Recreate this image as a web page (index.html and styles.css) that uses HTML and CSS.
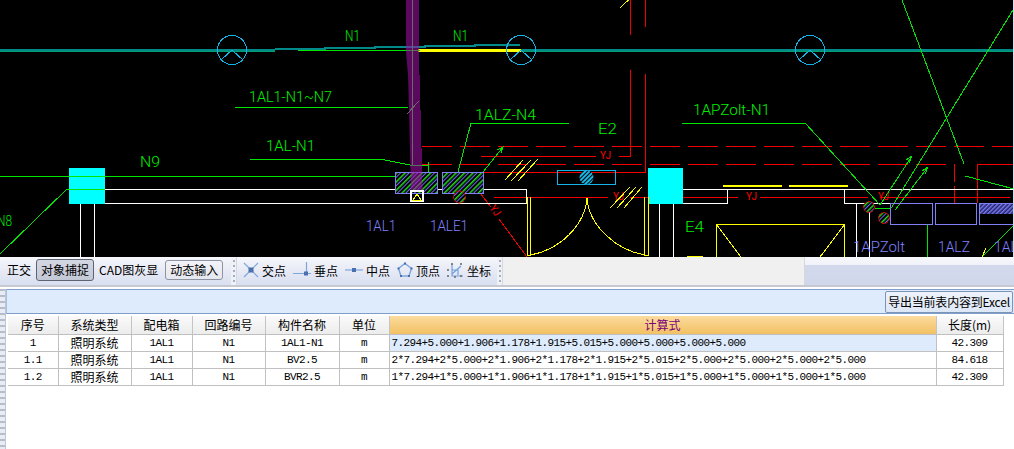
FILE: index.html
```html
<!DOCTYPE html>
<html lang="zh-CN">
<head>
<meta charset="utf-8">
<title>CAD</title>
<link rel="stylesheet" href="styles.css">
</head>
<body>
<div class="app">
  <svg class="canvas" width="1014" height="257" viewBox="0 0 1014 257">
    <defs>
      <pattern id="hatchG" width="6" height="6" patternUnits="userSpaceOnUse" patternTransform="rotate(45)">
        <rect width="6" height="6" fill="#000"/>
        <rect x="0" width="1.500" height="6" fill="#22dd22"/>
        <rect x="3" width="1" height="6" fill="#6a6af0"/>
      </pattern>
      <pattern id="hatchB" width="3" height="3" patternUnits="userSpaceOnUse" patternTransform="rotate(45)">
        <rect width="3" height="3" fill="#000"/>
        <rect x="0" width="2" height="3" fill="#1ab8e8"/>
      </pattern>
      <pattern id="hatchV" width="3" height="3" patternUnits="userSpaceOnUse" patternTransform="rotate(45)">
        <rect width="3" height="3" fill="#222266"/>
        <rect x="0" width="1.500" height="3" fill="#7a7af0"/>
      </pattern>
    </defs>

    <!-- long axis -->
    <path class="ln yellow w3" d="M418 50.500H521"/>
    <path class="ln green" d="M298 50.500H420"/>
    <path class="ln teal w3" d="M0 50H275M521 50H1014"/>
    <path class="ln teal w2" d="M275 49H325V48H375V47H425V46H475V45H520"/>
    <path class="ln axisg" d="M0 51H275M521 51H1014"/>

    <g class="cyanline">
      <circle cx="232" cy="50" r="14.500"/><path d="M232 50L221 60M232 50L243 60"/>
      <circle cx="521" cy="50" r="14.500"/><path d="M521 50L510 60M521 50L532 60"/>
      <circle cx="810" cy="50" r="14.500"/><path d="M810 50L799 60M810 50L821 60"/>
    </g>

    <!-- red structure -->
    <path class="ln red" d="M630 0V35M630 70V156H619M596 156H481M645 0V27M645 74V172H483"/>
    <path class="ln red dash" d="M422 146H1014M422 164H955"/>
    <path class="ln red" d="M977 203V164H1014M954 164V182M954 186V203"/>
    <path class="ln red" d="M494 197.500H608M630 197.500H738M760 197.500H868M880 197.500H1010"/>
    <path class="ln red" d="M480 193L491 207M499 219L527 257"/>
    <text class="cad redtx" x="600" y="159" textLength="11" lengthAdjust="spacingAndGlyphs">YJ</text>
    <text class="cad redtx" x="613" y="200" textLength="11" lengthAdjust="spacingAndGlyphs">YJ</text>
    <text class="cad redtx" x="746" y="200" textLength="11" lengthAdjust="spacingAndGlyphs">YJ</text>
    <text class="cad redtx" x="878" y="200" textLength="11" lengthAdjust="spacingAndGlyphs">YJ</text>
    <text class="cad redtx" transform="translate(489 208) rotate(55)" textLength="11" lengthAdjust="spacingAndGlyphs">YJ</text>

    <!-- walls -->
    <path class="ln white" d="M105 189H526V203H105M80.500 203V257M94.500 203V257"/>
    <path class="ln white" d="M683 189H727V203H683M727 189H1014M844 189V203H890M659.500 204V257M673.500 204V257M856 203V257M869 203V257"/>
    <rect class="cyanfill" x="69" y="168" width="36" height="36"/>
    <rect class="cyanfill" x="648" y="168" width="35" height="36"/>

    <!-- green leaders -->
    <path class="ln green" d="M0 176H395M67 189H105"/>
    <path class="ln green" d="M0 254L67 189"/>
    <path class="ln green" d="M235 107.500H408"/>
    <path class="ln green" d="M250 159H380L410 165H428M428 162V172"/>
    <path class="ln green" d="M471 123H569M458 172L471 123"/>
    <path class="ln green" d="M483 172L503 147M497 150L503 147 501 153"/>
    <path class="ln green" d="M682 123H805"/>
    <path class="ln green" d="M805 123L880 205M902 0L964 164M1013 10L890 210M965 176L1014 189M1014 225L982 257M880 205L912 156 906 160M912 156L909 163M895 210L928 167 922 171M928 167L925 174"/>
    <path class="ln green" d="M875 208H890M927 224V257"/>

    <!-- boxes -->
    <rect class="box hatched" x="395.500" y="172.500" width="42" height="21"/>
    <rect class="box hatched" x="442.500" y="172.500" width="41" height="21"/>
    <rect class="box" x="890.500" y="203.500" width="42" height="21"/>
    <rect class="box" x="935.500" y="203.500" width="41" height="21"/>
    <rect class="box" x="979.500" y="203.500" width="36" height="21"/>
    <rect class="vhatch" x="980" y="204" width="34" height="10"/>
    <circle class="redc hatched-c" cx="459.500" cy="197" r="6"/>
    <circle class="redc hatched-c" cx="869" cy="207" r="5.500"/>
    <circle class="redc hatched-c" cx="884" cy="218" r="5.500"/>
    <rect class="cyanbox" x="557.500" y="170.500" width="58" height="14"/>
    <circle class="bluec" cx="586.500" cy="177.500" r="7"/>

    <!-- yellow -->
    <path class="ln yellow" d="M527 197V255H530V197M644 197V255H648.500V197"/>
    <path class="ln yellow" d="M530 255C560 250 585 225 587 198C589 225 615 250 645 255"/>
    <path class="ln yellow w2" d="M723 186H782M789 186H848M687 256.500H703"/>
    <path class="ln yellow" d="M716.500 257V224.500H844.500V257"/>
    <path class="ln yellow" d="M716 224L741 257M845 224L820 257M982 257L986 248"/>
    <path class="ln yellow" d="M505 180L523 160M511 181L531 160M518 181L538 159M610 208L630 187M617 208L636 187M624 208L642 187M620 8L628 0M626 2L629 0"/>

    <!-- riser -->
    <path class="ln white w2" d="M411 191H422.500V201H411Z"/>
    <path class="ln yellow" d="M413 200L417 194 421 200Z"/>
    <path class="riser" d="M406 0H419V75L420 75V110L421 110V148L422 148V180L423 190H411L409 110 408 75 406 52Z"/>
    <path class="ln gray" d="M412.500 0V165M407 114L419 101"/>

    <!-- labels -->
    <text class="cad gtx" x="345" y="41" textLength="15" lengthAdjust="spacingAndGlyphs">N1</text>
    <text class="cad gtx" x="453" y="41" textLength="15" lengthAdjust="spacingAndGlyphs">N1</text>
    <text class="cad gtx" x="249" y="102" textLength="83" lengthAdjust="spacingAndGlyphs">1AL1-N1~N7</text>
    <text class="cad gtx" x="266" y="151" textLength="49" lengthAdjust="spacingAndGlyphs">1AL-N1</text>
    <text class="cad gtx" x="140" y="167" textLength="20" lengthAdjust="spacingAndGlyphs">N9</text>
    <text class="cad gtx" x="-3" y="226" textLength="15" lengthAdjust="spacingAndGlyphs">N8</text>
    <text class="cad gtx" x="475" y="120" textLength="61" lengthAdjust="spacingAndGlyphs">1ALZ-N4</text>
    <text class="cad gtx" x="598" y="134" textLength="19" lengthAdjust="spacingAndGlyphs">E2</text>
    <text class="cad gtx" x="685" y="232" textLength="19" lengthAdjust="spacingAndGlyphs">E4</text>
    <text class="cad gtx" x="693" y="115" textLength="77" lengthAdjust="spacingAndGlyphs">1APZolt-N1</text>
    <text class="cad btx" x="366" y="231" textLength="30" lengthAdjust="spacingAndGlyphs">1AL1</text>
    <text class="cad btx" x="430" y="231" textLength="38" lengthAdjust="spacingAndGlyphs">1ALE1</text>
    <text class="cad btx" x="853" y="252" textLength="52" lengthAdjust="spacingAndGlyphs">1APZolt</text>
    <text class="cad btx" x="938" y="252" textLength="32" lengthAdjust="spacingAndGlyphs">1ALZ</text>
    <text class="cad btx" x="994" y="252" textLength="24" lengthAdjust="spacingAndGlyphs">1AL</text>
    <rect class="edge" x="1013" y="0" width="1" height="257"/>
  </svg>

  <div class="toolbar">
    <div class="tool-group tool-group-a">
      <span class="tool">正交</span>
      <span class="tool btn btn-on">对象捕捉</span>
      <span class="tool">CAD图灰显</span>
      <span class="tool btn btn-dyn">动态输入</span>
    </div>
    <div class="grip"></div>
    <div class="tool-group tool-group-b">
      <span class="snap">
        <svg class="ico" width="16" height="16" viewBox="0 0 16 16"><path class="ic-l" d="M1 1L15 15M15 1L1 15"/><rect class="ic-d" x="5.500" y="5.500" width="5" height="5"/></svg>交点
      </span>
      <span class="snap">
        <svg class="ico ico-w" width="18" height="18" viewBox="0 0 18 18"><path class="ic-l" d="M0 12.500H18M13.500 1V13"/><rect class="ic-d" x="11" y="10.500" width="4" height="4"/></svg>垂点
      </span>
      <span class="snap">
        <svg class="ico ico-w" width="18" height="16" viewBox="0 0 18 16"><path class="ic-l" d="M0 8H18"/><rect class="ic-d" x="7" y="6" width="4" height="4"/></svg>中点
      </span>
      <span class="snap">
        <svg class="ico" width="16" height="16" viewBox="0 0 16 16"><path class="ic-p" d="M8 1.500L14.500 6.500 12 14H4L1.500 6.500Z"/><path class="ic-dots" d="M7 .500h2v2H7zM13.500 5.500h2v2h-2zM11 13h2v2h-2zM3 13h2v2H3zM.500 5.500h2v2h-2z"/></svg>顶点
      </span>
      <span class="snap">
        <svg class="ico" width="17" height="17" viewBox="0 0 17 17"><path class="ic-l2" d="M5 2V14H16M5 12L14 4M5 8H11V13"/><path class="ic-o" d="M5 1l1 1-1 1-1-1zM14 1l1 1-1 1-1-1zM1 7l1 1-1 1-1-1zM1 13l1 1-1 1-1-1zM8 14l1 1-1 1-1-1zM14 13l1 1-1 1-1-1z"/></svg>坐标
      </span>
    </div>
    <div class="grip"></div>
    <div class="tool-blank"></div>
    <div class="tool-end"></div>
  </div>

  <div class="lower">
    <div class="gutter"></div>
    <div class="panel">
      <div class="panel-bar"><button class="export">导出当前表内容到Excel</button></div>
      <table class="grid">
        <colgroup>
          <col class="c1"><col class="c2"><col class="c3"><col class="c4"><col class="c5"><col class="c6"><col class="c7"><col class="c8">
        </colgroup>
        <thead>
          <tr>
            <th>序号</th><th>系统类型</th><th>配电箱</th><th>回路编号</th><th>构件名称</th><th>单位</th><th class="active">计算式</th><th>长度(m)</th>
          </tr>
        </thead>
        <tbody>
          <tr>
            <td class="m">1</td><td>照明系统</td><td class="m">1AL1</td><td class="m">N1</td><td class="m">1AL1-N1</td><td class="m">m</td>
            <td class="m f sel">7.294+5.000+1.906+1.178+1.915+5.015+5.000+5.000+5.000+5.000</td><td class="m">42.309</td>
          </tr>
          <tr>
            <td class="m">1.1</td><td>照明系统</td><td class="m">1AL1</td><td class="m">N1</td><td class="m">BV2.5</td><td class="m">m</td>
            <td class="m f">2*7.294+2*5.000+2*1.906+2*1.178+2*1.915+2*5.015+2*5.000+2*5.000+2*5.000+2*5.000</td><td class="m">84.618</td>
          </tr>
          <tr>
            <td class="m">1.2</td><td>照明系统</td><td class="m">1AL1</td><td class="m">N1</td><td class="m">BVR2.5</td><td class="m">m</td>
            <td class="m f">1*7.294+1*5.000+1*1.906+1*1.178+1*1.915+1*5.015+1*5.000+1*5.000+1*5.000+1*5.000</td><td class="m">42.309</td>
          </tr>
        </tbody>
      </table>
    </div>
  </div>
</div>
</body>
</html>
```
FILE: styles.css
```css
* { box-sizing: border-box; }
html, body { margin: 0; padding: 0; background: #fff; overflow: hidden; }
body { font-family: "Noto Sans CJK SC", "Liberation Sans", sans-serif; font-size: 12px; color: #000; }
.app { width: 1014px; height: 449px; display: flex; flex-direction: column; }

/* CAD canvas */
.canvas { display: block; background: #000; flex: none; }
.ln { fill: none; shape-rendering: crispEdges; stroke-width: 1; }
.w2 { stroke-width: 2; }
.w3 { stroke-width: 3; }
.green { stroke: #00e600; }
.axisg { stroke: #00a070; }
.teal { stroke: #008a8a; }
.yellow { stroke: #ffff00; }
.red { stroke: #f00000; }
.white { stroke: #fff; }
.gray { stroke: #6a6a6a; }
.dash { stroke-dasharray: 30 8; }
.cyanline { fill: none; stroke: #14b4ea; stroke-width: 1; shape-rendering: crispEdges; }
.cyanfill { fill: #00ffff; }
.box { fill: none; stroke: #8080f4; stroke-width: 1; shape-rendering: crispEdges; }
.box.hatched { fill: url(#hatchG); }
.vhatch { fill: url(#hatchV); }
.redc { stroke: #f00000; stroke-width: 1; stroke-dasharray: 3 1; }
.hatched-c { fill: url(#hatchG); }
.cyanbox { fill: none; stroke: #14b4ea; stroke-width: 1; shape-rendering: crispEdges; }
.bluec { fill: url(#hatchB); }
.riser { fill: #a010a8; opacity: .56; }
.edge { fill: #cfe0f5; }
.cad { font-family: Roboto, "Liberation Sans", sans-serif; font-size: 15px; font-weight: 300; }
.gtx { fill: #00f000; }
.btx { fill: #8080ff; }
.redtx { fill: #ff0000; font-size: 11px; font-weight: 400; }

/* toolbar */
.toolbar { flex: none; height: 30px; display: flex; align-items: stretch; border-bottom: 2px solid #c6c9d2; background: #fff; }
.tool-group { display: flex; align-items: center; background: linear-gradient(#f7f8fc 0%, #eef0f8 25%, #d9dff0 100%); }
.tool-group-a { width: 231px; padding: 0 0 2px 7px; gap: 5px; }
.tool-group-b { width: 260px; padding: 0 0 2px 6px; gap: 7px; }
.tool { white-space: nowrap; line-height: 16px; }
.btn { display: flex; align-items: center; justify-content: center; width: 58px; height: 20px; border: 1px solid #8e93a2; border-radius: 3px; background: linear-gradient(#f2f3f8, #e6e8ef); }
.btn-on { width: 58px; height: 22px; border-color: #5e6474; background: linear-gradient(#d3d7e2, #c3c8d6); }
.btn-dyn { margin-left: 2px; }
.grip { width: 6px; flex: none; background: repeating-linear-gradient(#a9aeb9 0 2px, transparent 2px 5px) 2px 3px / 2px 22px no-repeat, #eef1f8; border-right: 1px solid #d5d8e0; }
.snap { display: flex; align-items: center; gap: 3px; white-space: nowrap; }
.ico { flex: none; display: block; }
.ic-l { fill: none; stroke: #7da6da; stroke-width: 1.200; }
.ic-l2 { fill: none; stroke: #6f9fdc; stroke-width: 1.200; }
.ic-d { fill: #4c6fae; }
.ic-p { fill: none; stroke: #7da6da; stroke-width: 1.400; }
.ic-dots { fill: #4c6fae; }
.ic-o { fill: #fff; stroke: #555; stroke-width: .7; }
.tool-blank { width: 302px; flex: none; background: #f0f0f0; border-right: 1px solid #d8d8d8; }
.tool-end { flex: 1; background: linear-gradient(#f7f8fc 0%, #f0f2f9 28%, #d2d9ec 29%, #d0d7ea 100%); }

/* lower panel */
.lower { flex: 1; display: flex; min-height: 0; background: #fff; padding-top: 2px; }
.gutter { width: 6px; flex: none; background: repeating-linear-gradient(#b8bcc6 0 2px, #e8ecf5 2px 6px); border-right: 1px solid #b9c6dc; }
.panel { flex: 1; min-width: 0; }
.panel-bar { height: 25px; display: flex; justify-content: flex-end; align-items: center; background: #deebfc; border-top: 1px solid #7f9ec9; border-bottom: 1px solid #7f9ec9; border-left: 1px solid #a9bedc; padding-right: 1px; }
.export { width: 128px; height: 22px; padding: 0; border: 1px solid #7b94b8; border-radius: 2px; background: linear-gradient(#eef3fb, #dde7f6); font-family: "Noto Sans CJK SC", "Liberation Sans", sans-serif; font-size: 12px; letter-spacing: -.2px; color: #000; white-space: nowrap; }
.grid { margin: 2px 0 0 2px; width: 995px; table-layout: fixed; border-collapse: collapse; }
.c1 { width: 50px; } .c2 { width: 73px; } .c3 { width: 61px; } .c4 { width: 73px; }
.c5 { width: 74px; } .c6 { width: 50px; } .c7 { width: 547px; } .c8 { width: 67px; }
.grid th { height: 18px; padding: 0; font-weight: 400; font-size: 12px; line-height: 16px; background: linear-gradient(#fafafa, #ececec); border-right: 1px solid #c4c4c4; border-bottom: 1px solid #c0c0c0; }
.grid th.active { background: linear-gradient(#fbdc9f, #f2c062); color: #7a007a; }
.grid td { height: 17px; padding: 1px 0 0; text-align: center; font-size: 12px; line-height: 14px; border-right: 1px solid #c0c0c0; border-bottom: 1px solid #c0c0c0; overflow: hidden; white-space: nowrap; }
.grid td.m { font-family: "Liberation Mono", "Noto Sans CJK SC", monospace; font-size: 11px; letter-spacing: -.6px; color: #000; }
.grid td.f { text-align: left; padding-left: 2px; }
.grid td.sel { background: #deebfc; }
```
